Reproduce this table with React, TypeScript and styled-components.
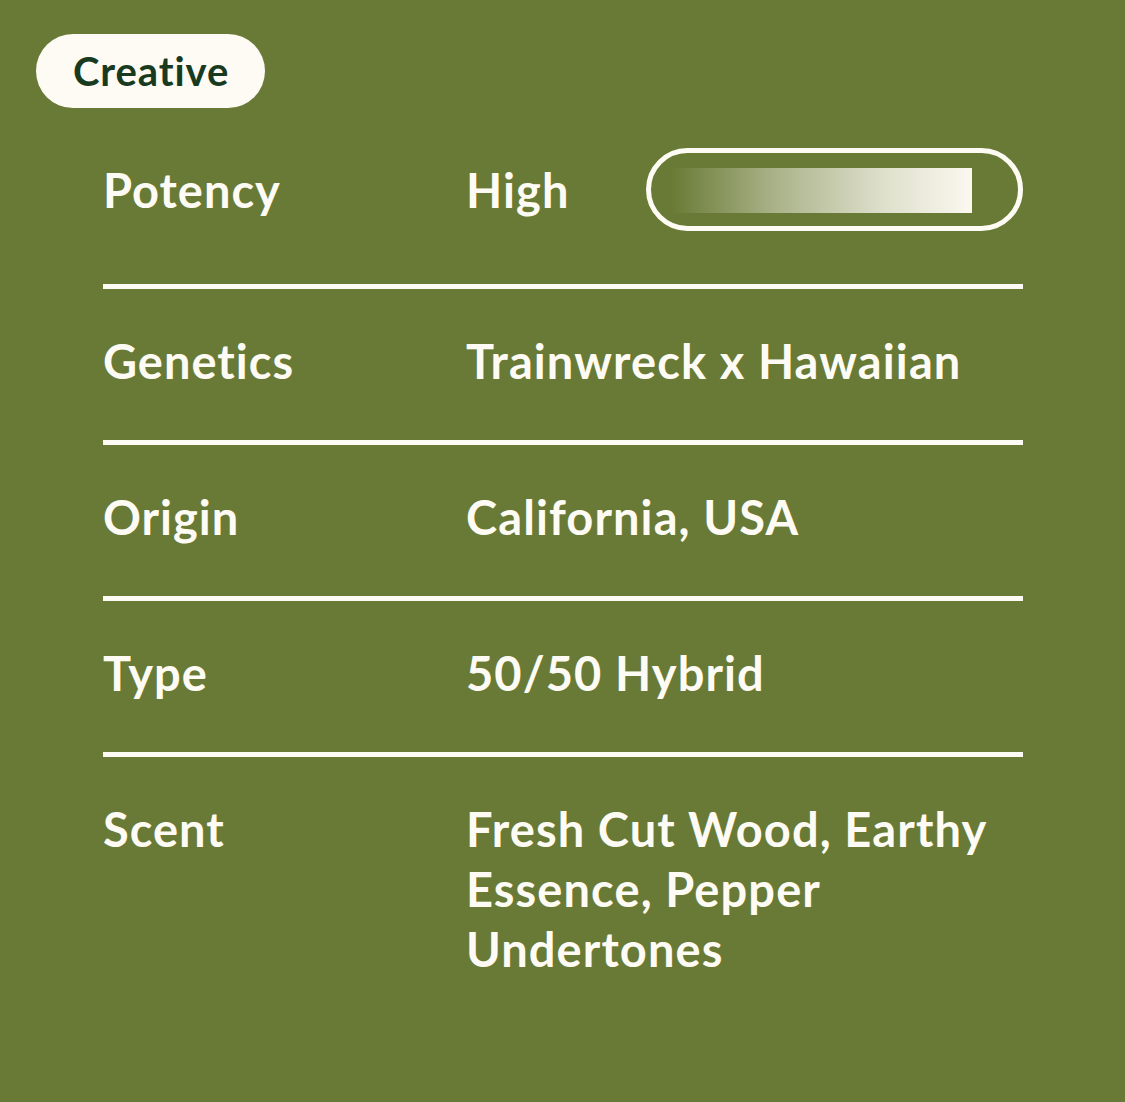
import styled, { createGlobalStyle } from 'styled-components';

const GlobalStyle = createGlobalStyle`
  html, body {
    margin: 0;
    padding: 0;
    background: #687a35;
  }
  * {
    box-sizing: border-box;
  }
`;

const Page = styled.div`
  min-height: 100vh;
  padding: 34px 102px 0 36px;
  background-color: #687a35;
  font-family: Lato, 'Noto Sans', sans-serif;
  color: #fdfbf3;
`;

const Badge = styled.div`
  display: inline-flex;
  align-items: center;
  height: 74px;
  padding: 0 36px 0 37px;
  border-radius: 37px;
  background-color: #fdfbf4;
  color: #183a1f;
  font-size: 40px;
  font-weight: 700;
  letter-spacing: 0.9px;
`;

const Table = styled.div`
  margin-top: 40px;
  margin-left: 67px;
`;

const Row = styled.div<{ $first?: boolean; $last?: boolean }>`
  display: grid;
  grid-template-columns: 363px 1fr;
  align-items: ${(props) => (props.$last ? 'start' : 'center')};
  padding: ${(props) =>
    props.$first ? '0 0 53px' : props.$last ? '42px 0 0' : '42px 0 49px'};
  border-bottom: ${(props) => (props.$last ? 'none' : '5px solid #fdfbf3')};
`;

const Label = styled.div`
  font-size: 47px;
  font-weight: 700;
  line-height: 60px;
  letter-spacing: 1px;
`;

const Value = styled.div`
  display: flex;
  align-items: center;
  justify-content: space-between;
  font-size: 47px;
  font-weight: 700;
  line-height: 60px;
  letter-spacing: 1.1px;
`;

const Gauge = styled.div`
  width: 377px;
  height: 83px;
  border: 5px solid #fdfbf3;
  border-radius: 42px;
  padding: 15px 46px 13px 19px;
  display: flex;
`;

const GaugeFill = styled.div`
  flex: 1;
  background: linear-gradient(
    to right,
    rgba(251, 248, 240, 0) 0%,
    rgba(251, 248, 240, 0.45) 35%,
    rgba(251, 248, 240, 0.8) 70%,
    rgba(251, 248, 240, 1) 100%
  );
`;

const rows = [
  { label: 'Genetics', value: 'Trainwreck x Hawaiian' },
  { label: 'Origin', value: 'California, USA' },
  { label: 'Type', value: '50/50 Hybrid' },
];

export default function App() {
  return (
    <>
      <GlobalStyle />
      <Page>
        <Badge>Creative</Badge>
        <Table>
          <Row $first>
            <Label>Potency</Label>
            <Value>
              <span>High</span>
              <Gauge>
                <GaugeFill />
              </Gauge>
            </Value>
          </Row>
          {rows.map((r) => (
            <Row key={r.label}>
              <Label>{r.label}</Label>
              <Value>{r.value}</Value>
            </Row>
          ))}
          <Row $last>
            <Label>Scent</Label>
            <Value>
              Fresh Cut Wood, Earthy
              <br />
              Essence, Pepper
              <br />
              Undertones
            </Value>
          </Row>
        </Table>
      </Page>
    </>
  );
}
